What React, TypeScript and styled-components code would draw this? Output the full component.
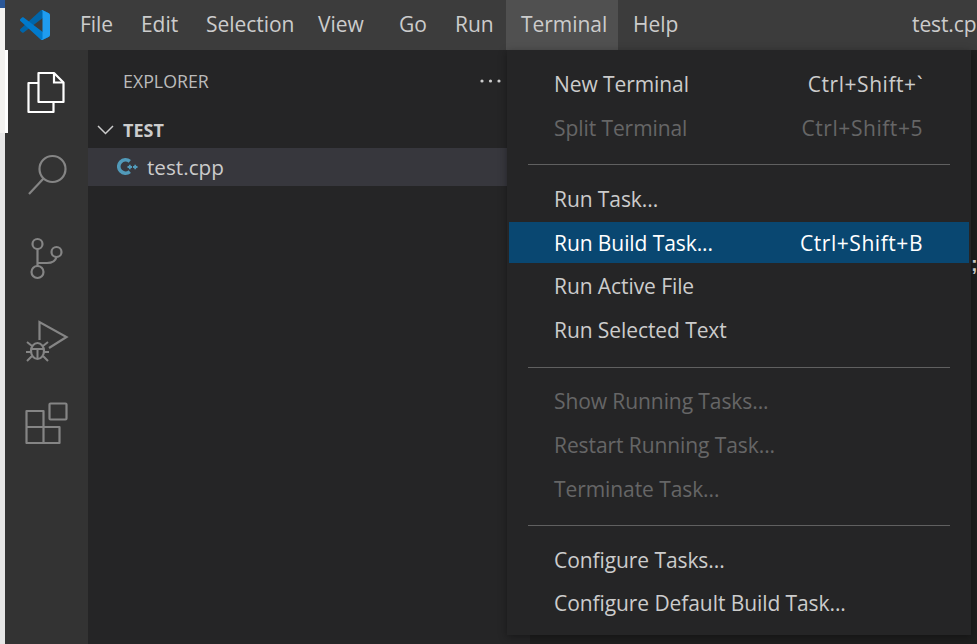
import { FC } from 'react'
import styled, { createGlobalStyle } from 'styled-components'

const uiFont = `'Open Sans', 'Noto Sans', sans-serif`

const GlobalStyle = createGlobalStyle`
  html, body {
    margin: 0;
    padding: 0;
    background: #1e1e1e;
  }
  #root {
    width: 977px;
    height: 644px;
    overflow: hidden;
  }
`

const Page = styled.div`
  display: flex;
  width: 977px;
  height: 644px;
  overflow: hidden;
  position: relative;
  font-family: ${uiFont};
  color: #cccccc;
`

const DesktopEdge = styled.div`
  width: 5px;
  flex: none;
  background: linear-gradient(
    to bottom,
    #2b5797 0,
    #2b5797 8px,
    #f3f2f0 8px,
    #f3f2f0 133px,
    #e6e6e6 133px
  );
`

const Window = styled.div`
  flex: 1;
  min-width: 0;
  display: flex;
  flex-direction: column;
`

const MenuBar = styled.div`
  height: 50px;
  flex: none;
  display: flex;
  align-items: stretch;
  background: #3c3c3c;
  white-space: nowrap;
  overflow: hidden;
`

const LogoCell = styled.div`
  width: 60px;
  flex: none;
  display: flex;
  align-items: center;
  padding-left: 15px;
  box-sizing: border-box;
`

const MenuTitle = styled.div<{ $width: number; $open?: boolean }>`
  width: ${p => p.$width}px;
  flex: none;
  display: flex;
  align-items: center;
  padding: 0 0 2px 15px;
  box-sizing: border-box;
  font-size: 21px;
  letter-spacing: -0.05px;
  background: ${p => (p.$open ? '#505050' : 'transparent')};
`

const WindowTitle = styled.div`
  margin-left: 229px;
  display: flex;
  align-items: center;
  padding-bottom: 2px;
  font-size: 21px;
  letter-spacing: -0.1px;
`

const Body = styled.div`
  flex: 1;
  display: flex;
  min-height: 0;
`

const ActivityBar = styled.div`
  width: 83px;
  flex: none;
  display: flex;
  flex-direction: column;
  background: #333333;
`

const ActivityItem = styled.div<{ $active?: boolean }>`
  height: 83px;
  flex: none;
  display: flex;
  align-items: center;
  justify-content: center;
  position: relative;
  color: ${p => (p.$active ? '#ffffff' : '#858585')};

  &::before {
    content: '';
    position: absolute;
    left: 0;
    top: 0;
    bottom: 0;
    width: 3px;
    background: ${p => (p.$active ? '#ffffff' : 'transparent')};
  }
`

const SideBar = styled.div`
  width: 442px;
  flex: none;
  background: #252526;
  display: flex;
  flex-direction: column;
`

const SideHeader = styled.div`
  height: 62px;
  flex: none;
  display: flex;
  align-items: center;
  justify-content: space-between;
  padding: 0 29px 0 35px;
  font-size: 17.8px;
  color: #bbbbbb;
`

const HeaderText = styled.span`
  width: 350px;
`

const FolderRow = styled.div`
  height: 36px;
  flex: none;
  display: flex;
  align-items: center;
  gap: 9px;
  padding-left: 9px;
  font-size: 18px;
  font-weight: 700;
  color: #cccccc;
`

const FileRow = styled.div`
  height: 38px;
  flex: none;
  display: flex;
  align-items: center;
  gap: 9px;
  padding-left: 29px;
  font-size: 20.7px;
  background: #37373d;
  color: #cccccc;
`

const Editor = styled.div`
  flex: 1;
  background: #1e1e1e;
  padding: 199px 0 0 441px;
  font-family: 'Liberation Sans', sans-serif;
  font-size: 20px;
  font-weight: 700;
  line-height: 30px;
  color: #d4d4d4;
  overflow: hidden;
`

const Menu = styled.div`
  position: absolute;
  left: 507px;
  top: 50px;
  width: 464px;
  height: 585px;
  box-sizing: border-box;
  padding: 13px 2px 0;
  display: flex;
  flex-direction: column;
  background: #252526;
  box-shadow: 0 2px 8px rgba(0, 0, 0, 0.36);
`

const MenuGroup = styled.div`
  display: flex;
  flex-direction: column;
  gap: 2.75px;
`

const MenuRow = styled.div<{ $disabled?: boolean; $active?: boolean }>`
  height: 41px;
  flex: none;
  padding: 1px 46px 0 45px;
  box-sizing: border-box;
  display: flex;
  align-items: center;
  justify-content: space-between;
  font-size: 21px;
  letter-spacing: -0.08px;
  white-space: nowrap;
  color: ${p => (p.$active ? '#ffffff' : p.$disabled ? '#666666' : '#cccccc')};
  background: ${p => (p.$active ? '#094771' : 'transparent')};
`

const Keys = styled.span`
  letter-spacing: 0.55px;
`

const MenuRule = styled.div`
  height: 1px;
  flex: none;
  margin: 16.5px 19px 12.5px;
  background: #606060;
`

const Logo: FC = () => (
  <svg width='30' height='30' viewBox='0 0 100 100'>
    <path
      fill='#0065A9'
      d='M96.46 10.8L75.86.88C73.47-.27 70.62.21 68.75 2.08L1.3 63.58c-1.81 1.65-1.81 4.51 0 6.16l5.51 5.01c1.49 1.35 3.72 1.45 5.32.24L93.36 13.37C96.09 11.3 100 13.25 100 16.67v-.24c0-2.4-1.38-4.59-3.54-5.63z'
    />
    <path
      fill='#007ACC'
      d='M96.46 89.2l-20.6 9.92c-2.39 1.15-5.24.67-7.11-1.2L1.3 36.42c-1.81-1.65-1.81-4.51 0-6.16l5.51-5.01c1.49-1.35 3.72-1.45 5.32-.24l81.23 61.62c2.73 2.07 6.64.12 6.64-3.3v.24c0 2.4-1.38 4.59-3.54 5.63z'
    />
    <path
      fill='#1F9CF0'
      d='M75.86 99.13c-2.39 1.15-5.24.66-7.11-1.21C71.06 100.22 75 98.59 75 95.33V4.67c0-3.26-3.94-4.89-6.25-2.59C70.62.21 73.47-.27 75.86.87l20.6 9.91C98.62 11.82 100 14.01 100 16.41v67.18c0 2.4-1.38 4.59-3.54 5.63l-20.6 9.91z'
    />
  </svg>
)

const ActivityIcon = styled.svg.attrs({
  width: 44,
  height: 44,
  viewBox: '0 0 44 44',
  fill: 'none',
  stroke: 'currentColor',
  strokeWidth: 2.2,
})``

const FilesIcon: FC = () => (
  <ActivityIcon>
    <path d='M13.5 3H29L38.5 12.5V32H13.5Z' strokeLinejoin='round' />
    <path d='M29 3V12.5H38.5' />
    <path d='M13.5 13H3.5V42H28.5V32' strokeLinejoin='round' />
  </ActivityIcon>
)

const SearchIcon: FC = () => (
  <ActivityIcon>
    <circle cx='27.5' cy='16' r='13' />
    <path d='M18.5 25.5L4 41' />
  </ActivityIcon>
)

const BranchIcon: FC = () => (
  <ActivityIcon>
    <circle cx='12.5' cy='8' r='5' />
    <circle cx='12.5' cy='36' r='6' />
    <circle cx='31.5' cy='16' r='5' />
    <path d='M12.5 13V30M12.5 27H22C27 27 30.5 25 31.5 21' />
  </ActivityIcon>
)

const DebugIcon: FC = () => (
  <ActivityIcon>
    <path d='M14.5 21V3L41.5 18L24 29' />
    <ellipse cx='12.5' cy='32' rx='6.5' ry='8' />
    <path d='M6 30H19M12.5 31V40M2 23L7 27M23 23L18 27M1 33H6M19 33H24M2 42L7 37M23 42L18 37' strokeWidth='2' />
  </ActivityIcon>
)

const ExtensionsIcon: FC = () => (
  <ActivityIcon>
    <rect x='24.5' y='1.5' width='17' height='16' rx='1' />
    <path d='M1.5 9H18.5V25H34.5V41H1.5ZM1.5 25H18.5V41' strokeLinejoin='round' />
  </ActivityIcon>
)

const Chevron: FC = () => (
  <svg width='17' height='10' viewBox='0 0 17 10' fill='none' stroke='#cccccc' strokeWidth='1.5'>
    <path d='M1 1L8.5 8.5L16 1' />
  </svg>
)

const CppIcon: FC = () => (
  <svg width='21' height='20' viewBox='0 0 21 20' fill='none' stroke='#519aba'>
    <path d='M12.8 4.4A6.7 6.7 0 1 0 12.8 14.6' strokeWidth='3.6' />
    <path d='M10.5 10H15M12.8 7.8V12.2M16 10H20.5M18.2 7.8V12.2' strokeWidth='1.8' />
  </svg>
)

const MoreIcon: FC = () => (
  <svg width='21' height='4' viewBox='0 0 21 4' fill='#cccccc'>
    <circle cx='2' cy='2' r='1.6' />
    <circle cx='10.5' cy='2' r='1.6' />
    <circle cx='19' cy='2' r='1.6' />
  </svg>
)

const menuTitles = [
  { label: 'File', width: 61 },
  { label: 'Edit', width: 65 },
  { label: 'Selection', width: 112 },
  { label: 'View', width: 81 },
  { label: 'Go', width: 56 },
  { label: 'Run', width: 66 },
  { label: 'Terminal', width: 112, open: true },
  { label: 'Help', width: 65 },
]

interface Entry {
  label: string
  keys?: string
  disabled?: boolean
  active?: boolean
}

const menuGroups: Entry[][] = [
  [
    { label: 'New Terminal', keys: 'Ctrl+Shift+`' },
    { label: 'Split Terminal', keys: 'Ctrl+Shift+5', disabled: true },
  ],
  [
    { label: 'Run Task...' },
    { label: 'Run Build Task...', keys: 'Ctrl+Shift+B', active: true },
    { label: 'Run Active File' },
    { label: 'Run Selected Text' },
  ],
  [
    { label: 'Show Running Tasks...', disabled: true },
    { label: 'Restart Running Task...', disabled: true },
    { label: 'Terminate Task...', disabled: true },
  ],
  [{ label: 'Configure Tasks...' }, { label: 'Configure Default Build Task...' }],
]

const App: FC = () => {
  return (
    <Page>
      <GlobalStyle />
      <DesktopEdge />
      <Window>
        <MenuBar>
          <LogoCell>
            <Logo />
          </LogoCell>
          {menuTitles.map(m => (
            <MenuTitle key={m.label} $width={m.width} $open={m.open}>
              {m.label}
            </MenuTitle>
          ))}
          <WindowTitle>test.cpp</WindowTitle>
        </MenuBar>
        <Body>
          <ActivityBar>
            <ActivityItem $active>
              <FilesIcon />
            </ActivityItem>
            <ActivityItem>
              <SearchIcon />
            </ActivityItem>
            <ActivityItem>
              <BranchIcon />
            </ActivityItem>
            <ActivityItem>
              <DebugIcon />
            </ActivityItem>
            <ActivityItem>
              <ExtensionsIcon />
            </ActivityItem>
          </ActivityBar>
          <SideBar>
            <SideHeader>
              <HeaderText>EXPLORER</HeaderText>
              <MoreIcon />
            </SideHeader>
            <FolderRow>
              <Chevron />
              TEST
            </FolderRow>
            <FileRow>
              <CppIcon />
              test.cpp
            </FileRow>
          </SideBar>
          <Editor>;</Editor>
        </Body>
      </Window>
      <Menu>
        {menuGroups.map((group, i) => (
          <div key={i}>
            {i > 0 && <MenuRule />}
            <MenuGroup>
              {group.map(item => (
                <MenuRow key={item.label} $disabled={item.disabled} $active={item.active}>
                  <span>{item.label}</span>
                  {item.keys && <Keys>{item.keys}</Keys>}
                </MenuRow>
              ))}
            </MenuGroup>
          </div>
        ))}
      </Menu>
    </Page>
  )
}

export default App
